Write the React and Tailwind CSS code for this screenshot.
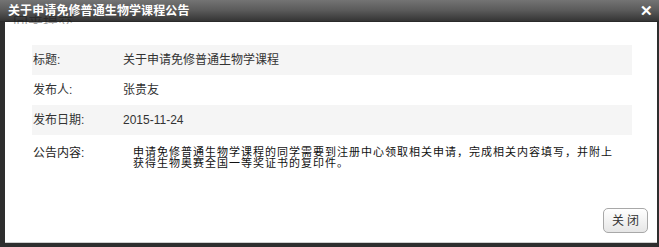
import React from "react";

const FONT = { fontFamily: '"Liberation Sans", "Noto Sans CJK SC", sans-serif' };

const ROWS = [
  { label: "标题:", value: "关于申请免修普通生物学课程", shade: true },
  { label: "发布人:", value: "张贵友", shade: false },
  { label: "发布日期:", value: "2015-11-24", shade: true },
];

export default function App() {
  return (
    <div className="relative w-[659px] h-[247px] bg-[#2e2e2e] flex flex-col overflow-hidden" style={FONT}>
      {/* title bar */}
      <div className="h-[22px] flex items-center justify-between pl-[8px] pr-[6px] bg-gradient-to-b from-[#747474] via-[#5a5a5a] to-[#353535] border-b border-[#2a2a2a]">
        <span className="text-white text-[12px] font-bold tracking-[0.1px]">关于申请免修普通生物学课程公告</span>
        <span className="text-white text-[15px] font-bold leading-none">✕</span>
      </div>

      {/* ghost text from the page behind */}
      <div className="absolute left-[13px] top-[14px] h-[10px] overflow-hidden opacity-40 pointer-events-none">
        <span className="block text-[15px] leading-[18px] text-[#111]">回来提交</span>
      </div>

      {/* body */}
      <div className="ml-[5px] mr-[2px] mb-[4px] flex-1 bg-white border-b border-[#cfcfcf] flex flex-col pt-[23px] pl-[27px] pr-[25px]">
        {ROWS.map((r) => (
          <div
            key={r.label}
            className={`h-[30px] flex items-center text-[12px] text-[#333] ${r.shade ? "bg-[#f5f5f5]" : ""}`}
          >
            <span className="w-[91px] pl-[1px]">{r.label}</span>
            <span>{r.value}</span>
          </div>
        ))}
        <div className="flex pt-[11px] text-[12px] text-[#222]">
          <span className="w-[101px] pl-[1px] leading-[14px]">公告内容:</span>
          <p className="whitespace-nowrap leading-[11px] tracking-[1px] text-[11px] text-[#111] pt-[1px]">
            申请免修普通生物学课程的同学需要到注册中心领取相关申请，完成相关内容填写，并附上
            <br />
            获得生物奥赛全国一等奖证书的复印件。
          </p>
        </div>
        <div className="flex-1" />
        <div className="flex justify-end pb-[9px] -mr-[16px]">
          <button className="w-[45px] h-[25px] rounded-[5px] border border-[#a8a8a8] bg-gradient-to-b from-white to-[#e6e6e6] text-[12px] text-[#333] tracking-[3px] pl-[3px]">
            关闭
          </button>
        </div>
      </div>
    </div>
  );
}
